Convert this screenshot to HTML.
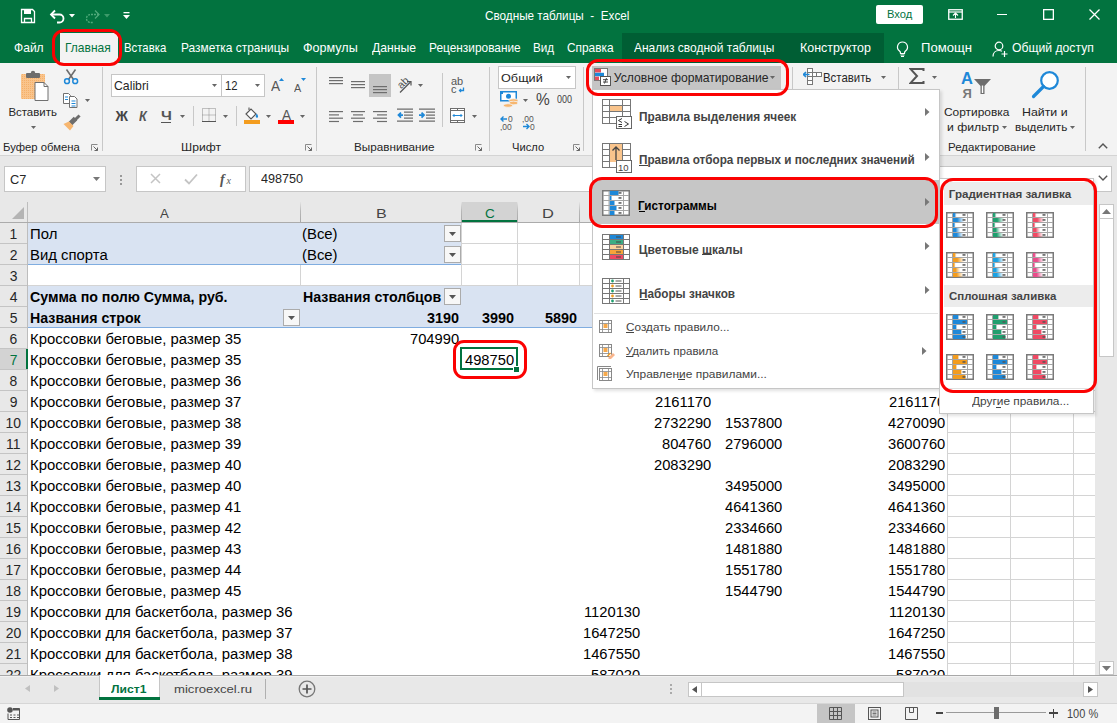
<!DOCTYPE html><html><head><meta charset="utf-8"><title>Excel</title><style>
html,body{margin:0;padding:0}
body{width:1117px;height:723px;overflow:hidden;position:relative;background:#fff;font-family:"Liberation Sans",sans-serif}
.t{position:absolute;white-space:nowrap;line-height:1}
svg{display:block}
</style></head><body>
<div style="position:absolute;left:0px;top:0px;width:1117px;height:63px;background:#02733f;"></div>
<div style="position:absolute;left:622px;top:33px;width:262px;height:30px;background:#005e34;"></div>
<svg style="position:absolute;left:20px;top:8px;" width="16" height="16" viewBox="0 0 16 16"><path d="M1.5 1.5h11l2 2v11h-13z" fill="none" stroke="#fff" stroke-width="1.3"/><rect x="4" y="1.5" width="7" height="4.5" fill="#fff"/><path d="M4.5 14.5v-4h7v4" fill="none" stroke="#fff" stroke-width="1.3"/></svg>
<svg style="position:absolute;left:49px;top:8px;" width="17" height="16" viewBox="0 0 17 16"><path d="M2 6.5h8.5a4 4 0 0 1 0 8H8" fill="none" stroke="#fff" stroke-width="1.8"/><path d="M6 2.5L2 6.5l4 4" fill="none" stroke="#fff" stroke-width="1.8"/></svg>
<svg style="position:absolute;left:69px;top:14px;" width="6" height="3.5" viewBox="0 0 6 3.5"><path d="M0 0h6l-3 3.5z" fill="#fff"/></svg>
<svg style="position:absolute;left:84px;top:8px;" width="17" height="16" viewBox="0 0 17 16"><path d="M15 6.5H6.5a4 4 0 0 0 0 8H9" fill="none" stroke="#4fa97a" stroke-width="1.3" stroke-dasharray="2 1"/><path d="M11 2.5l4 4-4 4" fill="none" stroke="#4fa97a" stroke-width="1.3"/></svg>
<svg style="position:absolute;left:104px;top:14px;" width="6" height="3.5" viewBox="0 0 6 3.5"><path d="M0 0h6l-3 3.5z" fill="#3d9a6a"/></svg>
<svg style="position:absolute;left:123px;top:12px;" width="7" height="8" viewBox="0 0 7 8"><rect x="0.5" y="0" width="6" height="1.3" fill="#fff"/><path d="M0 3h7l-3.5 4z" fill="#fff"/></svg>
<div class="t" style="left:485.41px;top:9.80px;font-size:12.75px;color:#fff;font-weight:400;transform:scaleX(0.9191);transform-origin:0 0;">Сводные таблицы  -  Excel</div>
<div style="position:absolute;left:876px;top:5px;width:47px;height:19px;background:#fff;border-radius:2px"></div>
<div class="t" style="left:886.71px;top:9.09px;font-size:11.59px;color:#02733f;font-weight:400;transform:scaleX(0.9641);transform-origin:0 0;">Вход</div>
<svg style="position:absolute;left:948px;top:9px;" width="15" height="11" viewBox="0 0 15 11"><rect x="0.75" y="0.75" width="13.5" height="9.5" fill="none" stroke="#fff" stroke-width="1.3"/><path d="M1 3h13" stroke="#fff" stroke-width="1.2"/><path d="M7.5 9V4.5M5 6.5l2.5-2.5 2.5 2.5" fill="none" stroke="#fff" stroke-width="1.1"/></svg>
<div style="position:absolute;left:997px;top:14px;width:10px;height:1.2px;background:#fff;"></div>
<svg style="position:absolute;left:1043px;top:9px;" width="11" height="11" viewBox="0 0 11 11"><rect x="0.65" y="0.65" width="9.7" height="9.7" fill="none" stroke="#fff" stroke-width="1.3"/></svg>
<svg style="position:absolute;left:1089px;top:9px;" width="11" height="11" viewBox="0 0 11 11"><path d="M0.5 0.5l10 10M10.5 0.5l-10 10" stroke="#fff" stroke-width="1.3"/></svg>
<div style="position:absolute;left:60px;top:33px;width:58px;height:30px;background:#f3f3f3;"></div>
<div class="t" style="left:13.64px;top:41.06px;font-size:13.04px;color:#fff;font-weight:400;transform:scaleX(0.9259);transform-origin:0 0;">Файл</div>
<div class="t" style="left:64.84px;top:41.06px;font-size:13.04px;color:#02733f;font-weight:400;transform:scaleX(0.9217);transform-origin:0 0;">Главная</div>
<div class="t" style="left:124.29px;top:41.06px;font-size:13.04px;color:#fff;font-weight:400;transform:scaleX(0.8711);transform-origin:0 0;">Вставка</div>
<div class="t" style="left:181.35px;top:41.06px;font-size:13.04px;color:#fff;font-weight:400;transform:scaleX(0.9140);transform-origin:0 0;">Разметка страницы</div>
<div class="t" style="left:303.11px;top:41.06px;font-size:13.04px;color:#fff;font-weight:400;transform:scaleX(0.9642);transform-origin:0 0;">Формулы</div>
<div class="t" style="left:371.94px;top:41.06px;font-size:13.04px;color:#fff;font-weight:400;transform:scaleX(0.9346);transform-origin:0 0;">Данные</div>
<div class="t" style="left:428.55px;top:41.06px;font-size:13.04px;color:#fff;font-weight:400;transform:scaleX(0.9115);transform-origin:0 0;">Рецензирование</div>
<div class="t" style="left:533.06px;top:41.06px;font-size:13.04px;color:#fff;font-weight:400;transform:scaleX(0.8967);transform-origin:0 0;">Вид</div>
<div class="t" style="left:567.41px;top:41.06px;font-size:13.04px;color:#fff;font-weight:400;transform:scaleX(0.9113);transform-origin:0 0;">Справка</div>
<div class="t" style="left:634.40px;top:41.06px;font-size:13.04px;color:#fff;font-weight:400;transform:scaleX(0.9203);transform-origin:0 0;">Анализ сводной таблицы</div>
<div class="t" style="left:800.00px;top:41.06px;font-size:13.04px;color:#fff;font-weight:400;transform:scaleX(0.9549);transform-origin:0 0;">Конструктор</div>
<div class="t" style="left:921.35px;top:41.06px;font-size:13.04px;color:#fff;font-weight:400;transform:scaleX(1.0052);transform-origin:0 0;">Помощн</div>
<div class="t" style="left:1011.75px;top:41.06px;font-size:13.04px;color:#fff;font-weight:400;transform:scaleX(0.9344);transform-origin:0 0;">Общий доступ</div>
<svg style="position:absolute;left:895px;top:41px;" width="15" height="16" viewBox="0 0 15 16"><path d="M7.5 1a5 5 0 0 0-3 9c.6.5 1 1.3 1 2v.5h4V12c0-.7.4-1.5 1-2a5 5 0 0 0-3-9z" fill="none" stroke="#fff" stroke-width="1.2"/><path d="M5.5 14h4M6 15.5h3" stroke="#fff" stroke-width="1"/></svg>
<svg style="position:absolute;left:992px;top:41px;" width="17" height="16" viewBox="0 0 17 16"><circle cx="7" cy="5" r="3.8" fill="none" stroke="#fff" stroke-width="1.2"/><path d="M1 15.5c0-3.5 2.5-6 6-6 1.2 0 2.2.3 3 .8" fill="none" stroke="#fff" stroke-width="1.2"/><path d="M12.5 10v6M9.5 13h6" stroke="#fff" stroke-width="1.2"/></svg>
<div style="position:absolute;left:0px;top:63px;width:1117px;height:92px;background:#f3f3f3;"></div>
<div style="position:absolute;left:0px;top:155px;width:1117px;height:1px;background:#d4d4d4;"></div>
<svg style="position:absolute;left:20px;top:70px;" width="30" height="32" viewBox="0 0 30 32"><defs><pattern id="dot" width="2" height="2" patternUnits="userSpaceOnUse"><rect width="2" height="2" fill="#f9c48c"/><rect width="1" height="1" fill="#f5b06a"/></pattern></defs>
<rect x="1" y="4" width="24" height="25" rx="1" fill="url(#dot)"/>
<rect x="6" y="3" width="14" height="5" rx="1" fill="#6d6d6d"/><circle cx="13" cy="3" r="2.2" fill="#6d6d6d"/>
<path d="M15 12.5h9l4 4v14h-13z" fill="#fff" stroke="#707070" stroke-width="1"/><path d="M24 12.5v4h4" fill="none" stroke="#707070" stroke-width="1"/></svg>
<div class="t" style="left:8.39px;top:106.71px;font-size:11.45px;color:#262626;font-weight:400;">Вставить</div>
<svg style="position:absolute;left:31.0px;top:126.0px;" width="5" height="3" viewBox="0 0 5 3"><path d="M0 0h5l-2.5 3z" fill="#666"/></svg>
<svg style="position:absolute;left:62px;top:68px;" width="18" height="17" viewBox="0 0 18 17"><path d="M4.5 1.5l7 10M13.5 1.5l-7 10" stroke="#6d6d6d" stroke-width="1.6"/><circle cx="5" cy="13.2" r="2.4" fill="none" stroke="#1e88d8" stroke-width="1.5"/><circle cx="13.2" cy="13.2" r="2.4" fill="none" stroke="#1e88d8" stroke-width="1.5"/></svg>
<svg style="position:absolute;left:62px;top:92px;" width="17" height="16" viewBox="0 0 17 16"><path d="M1.5 1.5h5l2 2v8h-7z" fill="#fff" stroke="#707070"/><path d="M7.5 4.5h5l2.5 2.5v8.5h-7.5z" fill="#fff" stroke="#707070"/><path d="M3 5h3M3 7.5h3M9.5 9h4M9.5 11.5h4M9.5 14h4" stroke="#1e88d8" stroke-width="1.2"/></svg>
<svg style="position:absolute;left:85.0px;top:99.0px;" width="5" height="3" viewBox="0 0 5 3"><path d="M0 0h5l-2.5 3z" fill="#666"/></svg>
<svg style="position:absolute;left:62px;top:114px;" width="19" height="17" viewBox="0 0 19 17"><path d="M16.5 2.5l-3 3" stroke="#6d6d6d" stroke-width="3" stroke-linecap="square"/><path d="M13.5 4.5l-5 5" stroke="#6d6d6d" stroke-width="5"/><path d="M7 7.5l4.5 4.5-3.5 4.5L1.5 10z" fill="#f7b66f"/></svg>
<div class="t" style="left:3.09px;top:141.58px;font-size:11.01px;color:#262626;font-weight:400;transform:scaleX(1.0276);transform-origin:0 0;">Буфер обмена</div>
<svg style="position:absolute;left:91px;top:144px;" width="7" height="7" viewBox="0 0 7 7"><path d="M0.5 6.5V0.5h6" fill="none" stroke="#8a8a8a" stroke-width="1"/><path d="M2.5 2.5l4 4M3.5 6.5h3v-3" fill="none" stroke="#666" stroke-width="1"/></svg>
<div style="position:absolute;left:102px;top:67px;width:1px;height:84px;background:#c8c8c8;"></div>
<div style="position:absolute;left:111px;top:74px;width:111px;height:23px;background:#fff;border:1px solid #c6c6c6;box-sizing:border-box;"></div>
<div style="position:absolute;left:221px;top:74px;width:44px;height:23px;background:#fff;border:1px solid #c6c6c6;box-sizing:border-box;"></div>
<div class="t" style="left:114.09px;top:79.69px;font-size:12.17px;color:#262626;font-weight:400;transform:scaleX(1.0075);transform-origin:0 0;">Calibri</div>
<svg style="position:absolute;left:211.5px;top:84.0px;" width="5" height="3" viewBox="0 0 5 3"><path d="M0 0h5l-2.5 3z" fill="#666"/></svg>
<div class="t" style="left:225.05px;top:79.69px;font-size:12.17px;color:#262626;font-weight:400;transform:scaleX(0.9257);transform-origin:0 0;">12</div>
<svg style="position:absolute;left:255.1px;top:84.0px;" width="5" height="3" viewBox="0 0 5 3"><path d="M0 0h5l-2.5 3z" fill="#666"/></svg>
<div class="t" style="left:271.40px;top:79.23px;font-size:14.49px;color:#555;font-weight:400;transform:scaleX(0.9442);transform-origin:0 0;">A</div>
<svg style="position:absolute;left:279px;top:78px;" width="5" height="3" viewBox="0 0 5 3"><path d="M0 3h5l-2.5-3z" fill="#1e88d8"/></svg>
<div class="t" style="left:294.40px;top:81.56px;font-size:11.74px;color:#555;font-weight:400;transform:scaleX(0.9223);transform-origin:0 0;">A</div>
<svg style="position:absolute;left:301px;top:78px;" width="5" height="3" viewBox="0 0 5 3"><path d="M0 0h5l-2.5 3z" fill="#1e88d8"/></svg>
<div class="t" style="left:115.50px;top:109.85px;font-size:13.77px;color:#444;font-weight:700;">Ж</div>
<div class="t" style="left:138.55px;top:109.85px;font-size:13.77px;color:#555;font-weight:700;font-style:italic;transform:scaleX(0.9163);transform-origin:0 0;">К</div>
<div class="t" style="left:160.65px;top:109.46px;font-size:13.04px;color:#555;font-weight:700;transform:scaleX(1.1897);transform-origin:0 0;">Ч</div>
<div style="position:absolute;left:161px;top:122px;width:10px;height:1.3px;background:#555;"></div>
<svg style="position:absolute;left:180.0px;top:115.0px;" width="5" height="3" viewBox="0 0 5 3"><path d="M0 0h5l-2.5 3z" fill="#666"/></svg>
<div style="position:absolute;left:193px;top:106px;width:1px;height:20px;background:#c8c8c8;"></div>
<svg style="position:absolute;left:202px;top:108px;" width="14" height="14" viewBox="0 0 14 14"><path d="M0.5 0.5h13v13h-13zM7 0.5v13M0.5 7h13" fill="none" stroke="#8a8a8a" stroke-width="1" stroke-dasharray="1 1"/><path d="M0 13.5h14" stroke="#555" stroke-width="1"/></svg>
<svg style="position:absolute;left:223.0px;top:115.0px;" width="5" height="3" viewBox="0 0 5 3"><path d="M0 0h5l-2.5 3z" fill="#666"/></svg>
<div style="position:absolute;left:236px;top:106px;width:1px;height:20px;background:#c8c8c8;"></div>
<svg style="position:absolute;left:243px;top:107px;" width="18" height="17" viewBox="0 0 18 17"><path d="M3 7l5-5 5 5-5 5z" fill="#fff" stroke="#555" stroke-width="1.1"/><path d="M6 3V0.5" stroke="#555" stroke-width="1.1"/><path d="M13.5 6.5c1.5 1.5 2 3 1.2 4-.8.6-2 0-2-1.3z" fill="#1e88d8"/><rect x="1" y="13" width="16" height="4" fill="#f39c1e"/></svg>
<svg style="position:absolute;left:266.0px;top:115.0px;" width="5" height="3" viewBox="0 0 5 3"><path d="M0 0h5l-2.5 3z" fill="#666"/></svg>
<div class="t" style="left:281.80px;top:108.23px;font-size:14.49px;color:#555;font-weight:400;transform:scaleX(0.9338);transform-origin:0 0;">A</div>
<div style="position:absolute;left:278px;top:120px;width:16px;height:4px;background:#f00;"></div>
<svg style="position:absolute;left:300.0px;top:115.0px;" width="5" height="3" viewBox="0 0 5 3"><path d="M0 0h5l-2.5 3z" fill="#666"/></svg>
<div class="t" style="left:181.43px;top:141.58px;font-size:11.01px;color:#262626;font-weight:400;transform:scaleX(1.1043);transform-origin:0 0;">Шрифт</div>
<svg style="position:absolute;left:305px;top:144px;" width="7" height="7" viewBox="0 0 7 7"><path d="M0.5 6.5V0.5h6" fill="none" stroke="#8a8a8a" stroke-width="1"/><path d="M2.5 2.5l4 4M3.5 6.5h3v-3" fill="none" stroke="#666" stroke-width="1"/></svg>
<div style="position:absolute;left:316px;top:67px;width:1px;height:84px;background:#c8c8c8;"></div>
<svg style="position:absolute;left:329px;top:77px;" width="14" height="8" viewBox="0 0 14 8"><rect x="0" y="0" width="14" height="1.2" fill="#6d6d6d"/><rect x="0" y="3" width="14" height="1.2" fill="#6d6d6d"/><rect x="0" y="6" width="14" height="1.2" fill="#6d6d6d"/></svg>
<svg style="position:absolute;left:351px;top:81px;" width="14" height="8" viewBox="0 0 14 8"><rect x="0" y="0" width="14" height="1.2" fill="#6d6d6d"/><rect x="0" y="3" width="14" height="1.2" fill="#6d6d6d"/><rect x="0" y="6" width="14" height="1.2" fill="#6d6d6d"/></svg>
<div style="position:absolute;left:369px;top:74px;width:22px;height:23px;background:#c5c5c5;"></div>
<svg style="position:absolute;left:373px;top:86px;" width="14" height="8" viewBox="0 0 14 8"><rect x="0" y="0" width="14" height="1.2" fill="#6d6d6d"/><rect x="0" y="3" width="14" height="1.2" fill="#6d6d6d"/><rect x="0" y="6" width="14" height="1.2" fill="#6d6d6d"/></svg>
<svg style="position:absolute;left:396px;top:76px;" width="19" height="17" viewBox="0 0 19 17"><text x="1" y="11" font-family="Liberation Sans" font-size="10.5" fill="#555" transform="rotate(-45 6 7)">ab</text><path d="M4 16.5L14.5 6" stroke="#555" stroke-width="1.2"/><path d="M11 5.5h4v4" fill="none" stroke="#555" stroke-width="1.2"/></svg>
<svg style="position:absolute;left:417.5px;top:84.0px;" width="5" height="3" viewBox="0 0 5 3"><path d="M0 0h5l-2.5 3z" fill="#666"/></svg>
<svg style="position:absolute;left:329px;top:111px;" width="14" height="11.9" viewBox="0 0 14 11.9"><rect x="0" y="0" width="14" height="1.2" fill="#6d6d6d"/><rect x="0" y="3.3" width="10" height="1.2" fill="#6d6d6d"/><rect x="0" y="6.6" width="14" height="1.2" fill="#6d6d6d"/><rect x="0" y="9.9" width="10" height="1.2" fill="#6d6d6d"/></svg>
<svg style="position:absolute;left:351px;top:111px;" width="14" height="11.9" viewBox="0 0 14 11.9"><rect x="0" y="0" width="14" height="1.2" fill="#6d6d6d"/><rect x="2" y="3.3" width="10" height="1.2" fill="#6d6d6d"/><rect x="0" y="6.6" width="14" height="1.2" fill="#6d6d6d"/><rect x="2" y="9.9" width="10" height="1.2" fill="#6d6d6d"/></svg>
<svg style="position:absolute;left:373px;top:111px;" width="14" height="11.9" viewBox="0 0 14 11.9"><rect x="0" y="0" width="14" height="1.2" fill="#6d6d6d"/><rect x="4" y="3.3" width="10" height="1.2" fill="#6d6d6d"/><rect x="0" y="6.6" width="14" height="1.2" fill="#6d6d6d"/><rect x="4" y="9.9" width="10" height="1.2" fill="#6d6d6d"/></svg>
<svg style="position:absolute;left:397px;top:108px;" width="17" height="14" viewBox="0 0 17 14"><path d="M0 1.1h16M7 4.1h9M7 7.1h9M7 10.1h9M0 13.1h16" stroke="#6d6d6d" stroke-width="1.2"/><path d="M1.5 7.1h4.5M4 4.6l-2.5 2.5 2.5 2.5" fill="none" stroke="#1e88d8" stroke-width="1.8"/></svg>
<svg style="position:absolute;left:419px;top:108px;" width="17" height="14" viewBox="0 0 17 14"><path d="M0 1.1h16M7 4.1h9M7 7.1h9M7 10.1h9M0 13.1h16" stroke="#6d6d6d" stroke-width="1.2"/><path d="M0 7.1h4.5M2.5 4.6l2.5 2.5-2.5 2.5" fill="none" stroke="#1e88d8" stroke-width="1.8"/></svg>
<div style="position:absolute;left:442px;top:73px;width:1px;height:54px;background:#c8c8c8;"></div>
<svg style="position:absolute;left:451px;top:76px;" width="15" height="18" viewBox="0 0 15 18"><text x="0" y="9" font-family="Liberation Sans" font-size="11" fill="#555">ab</text><text x="0" y="17" font-family="Liberation Sans" font-size="11" fill="#555">c</text><path d="M12.5 11.5v3H8.5M10 13l-1.5 1.5 1.5 1.5" fill="none" stroke="#1e88d8" stroke-width="1.3"/></svg>
<svg style="position:absolute;left:450px;top:108px;" width="15" height="15" viewBox="0 0 15 15"><rect x="0.5" y="0.5" width="14" height="14" fill="#fff" stroke="#6d6d6d"/><path d="M0.5 2.5h14M0.5 12.5h14M7.5 0.5v2M7.5 12.5v2" stroke="#6d6d6d"/><path d="M3 7.5h9M4.5 6l-1.5 1.5 1.5 1.5M10.5 6l1.5 1.5-1.5 1.5" fill="none" stroke="#1e88d8" stroke-width="1"/></svg>
<svg style="position:absolute;left:472.0px;top:115.0px;" width="5" height="3" viewBox="0 0 5 3"><path d="M0 0h5l-2.5 3z" fill="#666"/></svg>
<div class="t" style="left:354.26px;top:141.58px;font-size:11.01px;color:#262626;font-weight:400;transform:scaleX(1.0631);transform-origin:0 0;">Выравнивание</div>
<svg style="position:absolute;left:475px;top:144px;" width="7" height="7" viewBox="0 0 7 7"><path d="M0.5 6.5V0.5h6" fill="none" stroke="#8a8a8a" stroke-width="1"/><path d="M2.5 2.5l4 4M3.5 6.5h3v-3" fill="none" stroke="#666" stroke-width="1"/></svg>
<div style="position:absolute;left:489px;top:67px;width:1px;height:84px;background:#c8c8c8;"></div>
<div style="position:absolute;left:498px;top:66px;width:78px;height:23px;background:#fff;border:1px solid #c6c6c6;box-sizing:border-box;"></div>
<div class="t" style="left:500.73px;top:72.06px;font-size:11.74px;color:#262626;font-weight:400;transform:scaleX(1.0812);transform-origin:0 0;">Общий</div>
<svg style="position:absolute;left:566.0px;top:76.0px;" width="5" height="3" viewBox="0 0 5 3"><path d="M0 0h5l-2.5 3z" fill="#666"/></svg>
<svg style="position:absolute;left:500px;top:91px;" width="19" height="18" viewBox="0 0 19 18"><rect x="0.75" y="0.75" width="15.5" height="9" fill="#fff" stroke="#1e88d8" stroke-width="1.5"/><rect x="0" y="0" width="3" height="3" fill="#1e88d8"/><circle cx="8.5" cy="5.2" r="2.5" fill="#1e88d8"/><g fill="#f7b66f" stroke="#f3f3f3" stroke-width="0.8"><ellipse cx="13.5" cy="9.5" rx="4.5" ry="1.8"/><ellipse cx="13.5" cy="12" rx="4.5" ry="1.8"/><ellipse cx="8" cy="14.5" rx="4.5" ry="1.8"/></g></svg>
<svg style="position:absolute;left:523.0px;top:99.0px;" width="5" height="3" viewBox="0 0 5 3"><path d="M0 0h5l-2.5 3z" fill="#666"/></svg>
<div class="t" style="left:536.46px;top:91.87px;font-size:16.81px;color:#444;font-weight:400;transform:scaleX(0.9213);transform-origin:0 0;">%</div>
<div class="t" style="left:557.34px;top:94.67px;font-size:10.43px;color:#444;font-weight:400;transform:scaleX(0.8619);transform-origin:0 0;">000</div>
<svg style="position:absolute;left:500px;top:114px;" width="16" height="17" viewBox="0 0 16 17"><path d="M1 5h6M3.5 2.5L1 5l2.5 2.5" fill="none" stroke="#1e88d8" stroke-width="1.4"/><text x="8" y="8" font-family="Liberation Sans" font-size="8.5" fill="#555">0</text><text x="0" y="15.5" font-family="Liberation Sans" font-size="8.5" fill="#555">,00</text></svg>
<svg style="position:absolute;left:522px;top:114px;" width="16" height="17" viewBox="0 0 16 17"><text x="0" y="8" font-family="Liberation Sans" font-size="8.5" fill="#555">,00</text><path d="M1 12.5h6M4.5 10l2.5 2.5-2.5 2.5" fill="none" stroke="#1e88d8" stroke-width="1.4"/><text x="8" y="15.5" font-family="Liberation Sans" font-size="8.5" fill="#555">0</text></svg>
<div class="t" style="left:511.71px;top:141.58px;font-size:11.01px;color:#262626;font-weight:400;transform:scaleX(1.0150);transform-origin:0 0;">Число</div>
<svg style="position:absolute;left:573px;top:144px;" width="7" height="7" viewBox="0 0 7 7"><path d="M0.5 6.5V0.5h6" fill="none" stroke="#8a8a8a" stroke-width="1"/><path d="M2.5 2.5l4 4M3.5 6.5h3v-3" fill="none" stroke="#666" stroke-width="1"/></svg>
<div style="position:absolute;left:583px;top:67px;width:1px;height:84px;background:#c8c8c8;"></div>
<div style="position:absolute;left:592px;top:66px;width:189px;height:23px;background:#c5c5c5;"></div>
<svg style="position:absolute;left:594px;top:68px;" width="18" height="19" viewBox="0 0 18 19"><rect x="0.5" y="0.5" width="13" height="12" fill="#fff" stroke="#777"/><rect x="1" y="1" width="6" height="3.5" fill="#e84c5a"/><rect x="1" y="4.8" width="9" height="3.5" fill="#1e88d8"/><rect x="1" y="8.6" width="4" height="3.5" fill="#e84c5a"/><rect x="6.5" y="8.5" width="10" height="9" fill="#fff" stroke="#555"/><path d="M9 11.7h5M9 14h5M12.5 10l-2 5.5" stroke="#333" stroke-width="0.9"/></svg>
<div class="t" style="left:613.84px;top:71.69px;font-size:12.17px;color:#262626;font-weight:400;">Условное форматирование</div>
<svg style="position:absolute;left:769.5px;top:76.0px;" width="5" height="3" viewBox="0 0 5 3"><path d="M0 0h5l-2.5 3z" fill="#666"/></svg>
<div style="position:absolute;left:792px;top:67px;width:1px;height:84px;background:#c8c8c8;"></div>
<svg style="position:absolute;left:803px;top:68px;" width="19" height="17" viewBox="0 0 19 17"><rect x="4.5" y="0.5" width="5" height="4" fill="#fff" stroke="#777"/><rect x="4.5" y="4.5" width="5" height="4" fill="#fff" stroke="#777"/><rect x="4.5" y="8.5" width="5" height="4" fill="#fff" stroke="#777"/><rect x="4.5" y="12.5" width="5" height="4" fill="#fff" stroke="#777"/><rect x="9.5" y="4.5" width="4" height="4" fill="#fff" stroke="#777"/><rect x="13.5" y="4.5" width="5" height="4" fill="#fff" stroke="#777"/><path d="M0.5 6.5h6M3 4l-2.5 2.5L3 9" fill="none" stroke="#1e88d8" stroke-width="1.6"/></svg>
<div class="t" style="left:822.69px;top:71.69px;font-size:12.17px;color:#262626;font-weight:400;transform:scaleX(0.9371);transform-origin:0 0;">Вставить</div>
<svg style="position:absolute;left:881.0px;top:76.0px;" width="5" height="3" viewBox="0 0 5 3"><path d="M0 0h5l-2.5 3z" fill="#666"/></svg>
<div style="position:absolute;left:898px;top:67px;width:1px;height:84px;background:#c8c8c8;"></div>
<svg style="position:absolute;left:909px;top:68px;" width="16" height="16" viewBox="0 0 16 16"><path d="M14.5 3V1H1.5l6.5 7-6.5 7h13v-2" fill="none" stroke="#555" stroke-width="2"/></svg>
<svg style="position:absolute;left:932.0px;top:76.0px;" width="5" height="3" viewBox="0 0 5 3"><path d="M0 0h5l-2.5 3z" fill="#666"/></svg>
<svg style="position:absolute;left:961px;top:70px;" width="32" height="29" viewBox="0 0 32 29"><text x="0" y="14" font-family="Liberation Sans" font-weight="bold" font-size="16.5" fill="#1e88d8">A</text><text x="1.5" y="27.5" font-family="Liberation Sans" font-weight="bold" font-size="13" fill="#777">Я</text><path d="M13 9h17l-6.5 7v8h-4v-8z" fill="#6d6d6d"/><path d="M21.5 15.5v7.5" stroke="#fff" stroke-width="1.4"/></svg>
<svg style="position:absolute;left:1030px;top:70px;" width="30" height="30" viewBox="0 0 30 30"><circle cx="19.5" cy="10.5" r="8.3" fill="#fff" stroke="#1e88d8" stroke-width="2.2"/><path d="M13.5 16.5L3.5 26.5" stroke="#1e88d8" stroke-width="3.2" stroke-linecap="round"/></svg>
<div class="t" style="left:944.20px;top:106.99px;font-size:11.59px;color:#262626;font-weight:400;transform:scaleX(1.0299);transform-origin:0 0;">Сортировка</div>
<div class="t" style="left:947.15px;top:122.29px;font-size:11.59px;color:#262626;font-weight:400;transform:scaleX(1.0529);transform-origin:0 0;">и фильтр</div>
<svg style="position:absolute;left:1002.0px;top:126.0px;" width="5" height="3" viewBox="0 0 5 3"><path d="M0 0h5l-2.5 3z" fill="#666"/></svg>
<div class="t" style="left:1022.01px;top:106.99px;font-size:11.59px;color:#262626;font-weight:400;transform:scaleX(1.0672);transform-origin:0 0;">Найти и</div>
<div class="t" style="left:1014.98px;top:122.29px;font-size:11.59px;color:#262626;font-weight:400;transform:scaleX(1.0077);transform-origin:0 0;">выделить</div>
<svg style="position:absolute;left:1070.0px;top:126.0px;" width="5" height="3" viewBox="0 0 5 3"><path d="M0 0h5l-2.5 3z" fill="#666"/></svg>
<div class="t" style="left:947.78px;top:141.78px;font-size:11.01px;color:#262626;font-weight:400;transform:scaleX(1.0461);transform-origin:0 0;">Редактирование</div>
<div style="position:absolute;left:1085px;top:67px;width:1px;height:84px;background:#c8c8c8;"></div>
<svg style="position:absolute;left:1098px;top:143px;" width="10" height="6" viewBox="0 0 10 6"><path d="M0.8 5.2L5 1l4.2 4.2" fill="none" stroke="#555" stroke-width="1.4"/></svg>
<div style="position:absolute;left:0px;top:156px;width:1117px;height:46px;background:#e8e8e8;"></div>
<div style="position:absolute;left:4px;top:166px;width:102px;height:26px;background:#fff;border:1px solid #c6c6c6;box-sizing:border-box;"></div>
<div class="t" style="left:10.36px;top:173.55px;font-size:12.46px;color:#262626;font-weight:400;transform:scaleX(1.0242);transform-origin:0 0;">C7</div>
<svg style="position:absolute;left:92.5px;top:176.5px;" width="7" height="4" viewBox="0 0 7 4"><path d="M0 0h7l-3.5 4z" fill="#777"/></svg>
<div style="position:absolute;left:120px;top:175px;width:2px;height:2px;background:#999;"></div>
<div style="position:absolute;left:120px;top:179px;width:2px;height:2px;background:#999;"></div>
<div style="position:absolute;left:120px;top:183px;width:2px;height:2px;background:#999;"></div>
<div style="position:absolute;left:136px;top:166px;width:110px;height:26px;background:#fff;border:1px solid #c6c6c6;box-sizing:border-box;"></div>
<svg style="position:absolute;left:150px;top:173px;" width="11" height="11" viewBox="0 0 11 11"><path d="M1 1l9 9M10 1l-9 9" stroke="#c4c4c4" stroke-width="1.5"/></svg>
<svg style="position:absolute;left:184px;top:173px;" width="14" height="12" viewBox="0 0 14 12"><path d="M1 6.5l4 4L13 1.5" fill="none" stroke="#c4c4c4" stroke-width="1.8"/></svg>
<svg style="position:absolute;left:219px;top:170px;" width="16" height="18" viewBox="0 0 16 18"><text x="1" y="13.5" font-family="Liberation Serif" font-style="italic" font-weight="bold" font-size="14" fill="#555">f</text><text x="7.5" y="13.5" font-family="Liberation Serif" font-style="italic" font-size="10" fill="#555">x</text></svg>
<div style="position:absolute;left:249px;top:166px;width:863px;height:26px;background:#fff;border:1px solid #c6c6c6;box-sizing:border-box;"></div>
<div class="t" style="left:260.95px;top:173.30px;font-size:12.75px;color:#262626;font-weight:400;transform:scaleX(0.9897);transform-origin:0 0;">498750</div>
<svg style="position:absolute;left:1098px;top:175px;" width="10" height="6" viewBox="0 0 10 6"><path d="M0.8 0.8L5 5l4.2-4.2" fill="none" stroke="#555" stroke-width="1.4"/></svg>
<div style="position:absolute;left:0px;top:202px;width:1099px;height:20px;background:#e8e8e8;"></div>
<div style="position:absolute;left:0px;top:222px;width:27px;height:453px;background:#e8e8e8;"></div>
<svg style="position:absolute;left:11px;top:206px;" width="14" height="14" viewBox="0 0 14 14"><path d="M13 1v12H1z" fill="#b4b4b4"/></svg>
<div style="position:absolute;left:28px;top:223px;width:1067px;height:452px;background:#fff;"></div>
<div style="position:absolute;left:461px;top:202px;width:56px;height:20px;background:#d3d3d3;"></div>
<div style="position:absolute;left:461px;top:220px;width:56px;height:2px;background:#02733f;"></div>
<div style="position:absolute;left:300px;top:202px;width:1px;height:20px;background:linear-gradient(#e4e4e4,#b8b8b8 45%,#a8a8a8);"></div>
<div style="position:absolute;left:461px;top:202px;width:1px;height:20px;background:linear-gradient(#e4e4e4,#b8b8b8 45%,#a8a8a8);"></div>
<div style="position:absolute;left:517px;top:202px;width:1px;height:20px;background:linear-gradient(#e4e4e4,#b8b8b8 45%,#a8a8a8);"></div>
<div style="position:absolute;left:579px;top:202px;width:1px;height:20px;background:linear-gradient(#e4e4e4,#b8b8b8 45%,#a8a8a8);"></div>
<div style="position:absolute;left:643px;top:202px;width:1px;height:20px;background:linear-gradient(#e4e4e4,#b8b8b8 45%,#a8a8a8);"></div>
<div style="position:absolute;left:713px;top:202px;width:1px;height:20px;background:linear-gradient(#e4e4e4,#b8b8b8 45%,#a8a8a8);"></div>
<div style="position:absolute;left:784px;top:202px;width:1px;height:20px;background:linear-gradient(#e4e4e4,#b8b8b8 45%,#a8a8a8);"></div>
<div style="position:absolute;left:947px;top:202px;width:1px;height:20px;background:linear-gradient(#e4e4e4,#b8b8b8 45%,#a8a8a8);"></div>
<div style="position:absolute;left:1010px;top:202px;width:1px;height:20px;background:linear-gradient(#e4e4e4,#b8b8b8 45%,#a8a8a8);"></div>
<div style="position:absolute;left:1073px;top:202px;width:1px;height:20px;background:linear-gradient(#e4e4e4,#b8b8b8 45%,#a8a8a8);"></div>
<div style="position:absolute;left:1095px;top:202px;width:1px;height:20px;background:linear-gradient(#e4e4e4,#b8b8b8 45%,#a8a8a8);"></div>
<div style="position:absolute;left:27px;top:202px;width:1px;height:473px;background:#bdbdbd;"></div>
<div style="position:absolute;left:0px;top:222px;width:1095px;height:1px;background:#ababab;"></div>
<div style="position:absolute;left:0px;top:243px;width:27px;height:1px;background:#c4c4c4;"></div>
<div style="position:absolute;left:0px;top:264px;width:27px;height:1px;background:#c4c4c4;"></div>
<div style="position:absolute;left:0px;top:285px;width:27px;height:1px;background:#c4c4c4;"></div>
<div style="position:absolute;left:0px;top:306px;width:27px;height:1px;background:#c4c4c4;"></div>
<div style="position:absolute;left:0px;top:327px;width:27px;height:1px;background:#c4c4c4;"></div>
<div style="position:absolute;left:0px;top:348px;width:27px;height:1px;background:#c4c4c4;"></div>
<div style="position:absolute;left:0px;top:369px;width:27px;height:1px;background:#c4c4c4;"></div>
<div style="position:absolute;left:0px;top:390px;width:27px;height:1px;background:#c4c4c4;"></div>
<div style="position:absolute;left:0px;top:411px;width:27px;height:1px;background:#c4c4c4;"></div>
<div style="position:absolute;left:0px;top:432px;width:27px;height:1px;background:#c4c4c4;"></div>
<div style="position:absolute;left:0px;top:453px;width:27px;height:1px;background:#c4c4c4;"></div>
<div style="position:absolute;left:0px;top:474px;width:27px;height:1px;background:#c4c4c4;"></div>
<div style="position:absolute;left:0px;top:495px;width:27px;height:1px;background:#c4c4c4;"></div>
<div style="position:absolute;left:0px;top:516px;width:27px;height:1px;background:#c4c4c4;"></div>
<div style="position:absolute;left:0px;top:537px;width:27px;height:1px;background:#c4c4c4;"></div>
<div style="position:absolute;left:0px;top:558px;width:27px;height:1px;background:#c4c4c4;"></div>
<div style="position:absolute;left:0px;top:579px;width:27px;height:1px;background:#c4c4c4;"></div>
<div style="position:absolute;left:0px;top:600px;width:27px;height:1px;background:#c4c4c4;"></div>
<div style="position:absolute;left:0px;top:621px;width:27px;height:1px;background:#c4c4c4;"></div>
<div style="position:absolute;left:0px;top:642px;width:27px;height:1px;background:#c4c4c4;"></div>
<div style="position:absolute;left:0px;top:663px;width:27px;height:1px;background:#c4c4c4;"></div>
<div style="position:absolute;left:0px;top:684px;width:27px;height:1px;background:#c4c4c4;"></div>
<div style="position:absolute;left:0px;top:349px;width:27px;height:20px;background:#d3d3d3;"></div>
<div style="position:absolute;left:26px;top:349px;width:2px;height:20px;background:#02733f;"></div>
<div style="position:absolute;left:28px;top:243px;width:1067px;height:1px;background:#d4d4d4;"></div>
<div style="position:absolute;left:28px;top:264px;width:1067px;height:1px;background:#d4d4d4;"></div>
<div style="position:absolute;left:28px;top:285px;width:1067px;height:1px;background:#d4d4d4;"></div>
<div style="position:absolute;left:28px;top:306px;width:1067px;height:1px;background:#d4d4d4;"></div>
<div style="position:absolute;left:28px;top:327px;width:1067px;height:1px;background:#d4d4d4;"></div>
<div style="position:absolute;left:28px;top:348px;width:1067px;height:1px;background:#d4d4d4;"></div>
<div style="position:absolute;left:28px;top:369px;width:1067px;height:1px;background:#d4d4d4;"></div>
<div style="position:absolute;left:28px;top:390px;width:1067px;height:1px;background:#d4d4d4;"></div>
<div style="position:absolute;left:28px;top:411px;width:1067px;height:1px;background:#d4d4d4;"></div>
<div style="position:absolute;left:28px;top:432px;width:1067px;height:1px;background:#d4d4d4;"></div>
<div style="position:absolute;left:28px;top:453px;width:1067px;height:1px;background:#d4d4d4;"></div>
<div style="position:absolute;left:28px;top:474px;width:1067px;height:1px;background:#d4d4d4;"></div>
<div style="position:absolute;left:28px;top:495px;width:1067px;height:1px;background:#d4d4d4;"></div>
<div style="position:absolute;left:28px;top:516px;width:1067px;height:1px;background:#d4d4d4;"></div>
<div style="position:absolute;left:28px;top:537px;width:1067px;height:1px;background:#d4d4d4;"></div>
<div style="position:absolute;left:28px;top:558px;width:1067px;height:1px;background:#d4d4d4;"></div>
<div style="position:absolute;left:28px;top:579px;width:1067px;height:1px;background:#d4d4d4;"></div>
<div style="position:absolute;left:28px;top:600px;width:1067px;height:1px;background:#d4d4d4;"></div>
<div style="position:absolute;left:28px;top:621px;width:1067px;height:1px;background:#d4d4d4;"></div>
<div style="position:absolute;left:28px;top:642px;width:1067px;height:1px;background:#d4d4d4;"></div>
<div style="position:absolute;left:28px;top:663px;width:1067px;height:1px;background:#d4d4d4;"></div>
<div style="position:absolute;left:28px;top:684px;width:1067px;height:1px;background:#d4d4d4;"></div>
<div style="position:absolute;left:300px;top:223px;width:1px;height:452px;background:#d4d4d4;"></div>
<div style="position:absolute;left:461px;top:223px;width:1px;height:452px;background:#d4d4d4;"></div>
<div style="position:absolute;left:517px;top:223px;width:1px;height:452px;background:#d4d4d4;"></div>
<div style="position:absolute;left:579px;top:223px;width:1px;height:452px;background:#d4d4d4;"></div>
<div style="position:absolute;left:643px;top:223px;width:1px;height:452px;background:#d4d4d4;"></div>
<div style="position:absolute;left:713px;top:223px;width:1px;height:452px;background:#d4d4d4;"></div>
<div style="position:absolute;left:784px;top:223px;width:1px;height:452px;background:#d4d4d4;"></div>
<div style="position:absolute;left:947px;top:223px;width:1px;height:452px;background:#d4d4d4;"></div>
<div style="position:absolute;left:1010px;top:223px;width:1px;height:452px;background:#d4d4d4;"></div>
<div style="position:absolute;left:1073px;top:223px;width:1px;height:452px;background:#d4d4d4;"></div>
<div style="position:absolute;left:28px;top:328px;width:919px;height:347px;background:#fff;"></div>
<div style="position:absolute;left:28px;top:223px;width:433px;height:41px;background:#d9e3f2;"></div>
<div style="position:absolute;left:28px;top:264px;width:433px;height:1px;background:#80ade0;"></div>
<div style="position:absolute;left:28px;top:286px;width:919px;height:41px;background:#d9e3f2;"></div>
<div style="position:absolute;left:28px;top:327px;width:919px;height:1px;background:#80ade0;"></div>
<div style="position:absolute;left:444px;top:225px;width:17px;height:17px;background:#f7f7f7;border:1px solid #ababab;box-sizing:border-box;"></div>
<svg style="position:absolute;left:449.0px;top:231.5px;" width="7" height="4" viewBox="0 0 7 4"><path d="M0 0h7l-3.5 4z" fill="#555"/></svg>
<div style="position:absolute;left:444px;top:246px;width:17px;height:17px;background:#f7f7f7;border:1px solid #ababab;box-sizing:border-box;"></div>
<svg style="position:absolute;left:449.0px;top:252.5px;" width="7" height="4" viewBox="0 0 7 4"><path d="M0 0h7l-3.5 4z" fill="#555"/></svg>
<div style="position:absolute;left:444px;top:288px;width:17px;height:17px;background:#f7f7f7;border:1px solid #ababab;box-sizing:border-box;"></div>
<svg style="position:absolute;left:449.0px;top:294.5px;" width="7" height="4" viewBox="0 0 7 4"><path d="M0 0h7l-3.5 4z" fill="#555"/></svg>
<div style="position:absolute;left:283px;top:309px;width:17px;height:17px;background:#f7f7f7;border:1px solid #ababab;box-sizing:border-box;"></div>
<svg style="position:absolute;left:288.0px;top:315.5px;" width="7" height="4" viewBox="0 0 7 4"><path d="M0 0h7l-3.5 4z" fill="#555"/></svg>
<div class="t" style="left:160.40px;top:207.77px;font-size:12.32px;color:#444;font-weight:400;transform:scaleX(1.0742);transform-origin:0 0;">A</div>
<div class="t" style="left:376.11px;top:207.77px;font-size:12.32px;color:#444;font-weight:400;transform:scaleX(1.3049);transform-origin:0 0;">B</div>
<div class="t" style="left:485.02px;top:207.77px;font-size:12.32px;color:#02733f;font-weight:400;transform:scaleX(1.0994);transform-origin:0 0;">C</div>
<div class="t" style="left:541.68px;top:207.77px;font-size:12.32px;color:#444;font-weight:400;transform:scaleX(1.3370);transform-origin:0 0;">D</div>
<div class="t" style="left:9.43px;top:228.22px;font-size:13.91px;color:#262626;font-weight:400;">1</div>
<div class="t" style="left:9.64px;top:249.22px;font-size:13.91px;color:#262626;font-weight:400;">2</div>
<div class="t" style="left:9.64px;top:270.22px;font-size:13.91px;color:#262626;font-weight:400;">3</div>
<div class="t" style="left:9.71px;top:291.22px;font-size:13.91px;color:#262626;font-weight:400;">4</div>
<div class="t" style="left:9.64px;top:312.22px;font-size:13.91px;color:#262626;font-weight:400;">5</div>
<div class="t" style="left:9.57px;top:333.22px;font-size:13.91px;color:#262626;font-weight:400;">6</div>
<div class="t" style="left:9.64px;top:354.22px;font-size:13.91px;color:#02733f;font-weight:400;">7</div>
<div class="t" style="left:9.60px;top:375.22px;font-size:13.91px;color:#262626;font-weight:400;">8</div>
<div class="t" style="left:9.64px;top:396.22px;font-size:13.91px;color:#262626;font-weight:400;">9</div>
<div class="t" style="left:5.50px;top:417.22px;font-size:13.91px;color:#262626;font-weight:400;">10</div>
<div class="t" style="left:6.09px;top:438.22px;font-size:13.91px;color:#262626;font-weight:400;">11</div>
<div class="t" style="left:5.60px;top:459.22px;font-size:13.91px;color:#262626;font-weight:400;">12</div>
<div class="t" style="left:5.53px;top:480.22px;font-size:13.91px;color:#262626;font-weight:400;">13</div>
<div class="t" style="left:5.47px;top:501.22px;font-size:13.91px;color:#262626;font-weight:400;">14</div>
<div class="t" style="left:5.53px;top:522.22px;font-size:13.91px;color:#262626;font-weight:400;">15</div>
<div class="t" style="left:5.53px;top:543.22px;font-size:13.91px;color:#262626;font-weight:400;">16</div>
<div class="t" style="left:5.60px;top:564.22px;font-size:13.91px;color:#262626;font-weight:400;">17</div>
<div class="t" style="left:5.53px;top:585.22px;font-size:13.91px;color:#262626;font-weight:400;">18</div>
<div class="t" style="left:5.57px;top:606.22px;font-size:13.91px;color:#262626;font-weight:400;">19</div>
<div class="t" style="left:5.67px;top:627.22px;font-size:13.91px;color:#262626;font-weight:400;">20</div>
<div class="t" style="left:5.74px;top:648.22px;font-size:13.91px;color:#262626;font-weight:400;">21</div>
<div class="t" style="left:5.78px;top:669.22px;font-size:13.91px;color:#262626;font-weight:400;">22</div>
<div class="t" style="left:29.71px;top:228.22px;font-size:13.91px;color:#000;font-weight:400;transform:scaleX(1.0698);transform-origin:0 0;">Пол</div>
<div class="t" style="left:29.71px;top:249.22px;font-size:13.91px;color:#000;font-weight:400;transform:scaleX(1.0698);transform-origin:0 0;">Вид спорта</div>
<div class="t" style="left:302.21px;top:228.22px;font-size:13.91px;color:#000;font-weight:400;transform:scaleX(1.0698);transform-origin:0 0;">(Все)</div>
<div class="t" style="left:302.21px;top:249.22px;font-size:13.91px;color:#000;font-weight:400;transform:scaleX(1.0698);transform-origin:0 0;">(Все)</div>
<div class="t" style="left:30.33px;top:291.22px;font-size:13.91px;color:#000;font-weight:700;transform:scaleX(1.0214);transform-origin:0 0;">Сумма по полю Сумма, руб.</div>
<div class="t" style="left:302.88px;top:291.22px;font-size:13.91px;color:#000;font-weight:700;transform:scaleX(1.0214);transform-origin:0 0;">Названия столбцов</div>
<div class="t" style="left:29.98px;top:312.22px;font-size:13.91px;color:#000;font-weight:700;transform:scaleX(1.0214);transform-origin:0 0;">Названия строк</div>
<div class="t" style="left:427.04px;top:312.22px;font-size:13.91px;color:#000;font-weight:700;transform:scaleX(1.0349);transform-origin:0 0;">3190</div>
<div class="t" style="left:481.94px;top:312.22px;font-size:13.91px;color:#000;font-weight:700;transform:scaleX(1.0349);transform-origin:0 0;">3990</div>
<div class="t" style="left:545.24px;top:312.22px;font-size:13.91px;color:#000;font-weight:700;transform:scaleX(1.0349);transform-origin:0 0;">5890</div>
<div class="t" style="left:29.51px;top:333.22px;font-size:13.91px;color:#000;font-weight:400;transform:scaleX(1.0698);transform-origin:0 0;">Кроссовки беговые, размер 35</div>
<div class="t" style="left:29.51px;top:354.22px;font-size:13.91px;color:#000;font-weight:400;transform:scaleX(1.0698);transform-origin:0 0;">Кроссовки беговые, размер 35</div>
<div class="t" style="left:29.51px;top:375.22px;font-size:13.91px;color:#000;font-weight:400;transform:scaleX(1.0698);transform-origin:0 0;">Кроссовки беговые, размер 36</div>
<div class="t" style="left:29.51px;top:396.22px;font-size:13.91px;color:#000;font-weight:400;transform:scaleX(1.0698);transform-origin:0 0;">Кроссовки беговые, размер 37</div>
<div class="t" style="left:29.51px;top:417.22px;font-size:13.91px;color:#000;font-weight:400;transform:scaleX(1.0698);transform-origin:0 0;">Кроссовки беговые, размер 38</div>
<div class="t" style="left:29.51px;top:438.22px;font-size:13.91px;color:#000;font-weight:400;transform:scaleX(1.0698);transform-origin:0 0;">Кроссовки беговые, размер 39</div>
<div class="t" style="left:29.51px;top:459.22px;font-size:13.91px;color:#000;font-weight:400;transform:scaleX(1.0698);transform-origin:0 0;">Кроссовки беговые, размер 40</div>
<div class="t" style="left:29.51px;top:480.22px;font-size:13.91px;color:#000;font-weight:400;transform:scaleX(1.0698);transform-origin:0 0;">Кроссовки беговые, размер 40</div>
<div class="t" style="left:29.51px;top:501.22px;font-size:13.91px;color:#000;font-weight:400;transform:scaleX(1.0698);transform-origin:0 0;">Кроссовки беговые, размер 41</div>
<div class="t" style="left:29.51px;top:522.22px;font-size:13.91px;color:#000;font-weight:400;transform:scaleX(1.0698);transform-origin:0 0;">Кроссовки беговые, размер 42</div>
<div class="t" style="left:29.51px;top:543.22px;font-size:13.91px;color:#000;font-weight:400;transform:scaleX(1.0698);transform-origin:0 0;">Кроссовки беговые, размер 43</div>
<div class="t" style="left:29.51px;top:564.22px;font-size:13.91px;color:#000;font-weight:400;transform:scaleX(1.0698);transform-origin:0 0;">Кроссовки беговые, размер 44</div>
<div class="t" style="left:29.51px;top:585.22px;font-size:13.91px;color:#000;font-weight:400;transform:scaleX(1.0698);transform-origin:0 0;">Кроссовки беговые, размер 45</div>
<div class="t" style="left:29.51px;top:606.22px;font-size:13.91px;color:#000;font-weight:400;transform:scaleX(1.0698);transform-origin:0 0;">Кроссовки для баскетбола, размер 36</div>
<div class="t" style="left:29.51px;top:627.22px;font-size:13.91px;color:#000;font-weight:400;transform:scaleX(1.0698);transform-origin:0 0;">Кроссовки для баскетбола, размер 37</div>
<div class="t" style="left:29.51px;top:648.22px;font-size:13.91px;color:#000;font-weight:400;transform:scaleX(1.0698);transform-origin:0 0;">Кроссовки для баскетбола, размер 38</div>
<div class="t" style="left:29.51px;top:669.22px;font-size:13.91px;color:#000;font-weight:400;transform:scaleX(1.0698);transform-origin:0 0;">Кроссовки для баскетбола, размер 39</div>
<div class="t" style="left:409.91px;top:333.22px;font-size:13.91px;color:#000;font-weight:400;transform:scaleX(1.0584);transform-origin:0 0;">704990</div>
<div class="t" style="left:464.81px;top:354.22px;font-size:13.91px;color:#000;font-weight:400;transform:scaleX(1.0584);transform-origin:0 0;">498750</div>
<div class="t" style="left:654.76px;top:396.22px;font-size:13.91px;color:#000;font-weight:400;transform:scaleX(1.0584);transform-origin:0 0;">2161170</div>
<div class="t" style="left:888.86px;top:396.22px;font-size:13.91px;color:#000;font-weight:400;transform:scaleX(1.0584);transform-origin:0 0;">2161170</div>
<div class="t" style="left:653.73px;top:417.22px;font-size:13.91px;color:#000;font-weight:400;transform:scaleX(1.0584);transform-origin:0 0;">2732290</div>
<div class="t" style="left:725.23px;top:417.22px;font-size:13.91px;color:#000;font-weight:400;transform:scaleX(1.0584);transform-origin:0 0;">1537800</div>
<div class="t" style="left:887.83px;top:417.22px;font-size:13.91px;color:#000;font-weight:400;transform:scaleX(1.0584);transform-origin:0 0;">4270090</div>
<div class="t" style="left:661.91px;top:438.22px;font-size:13.91px;color:#000;font-weight:400;transform:scaleX(1.0584);transform-origin:0 0;">804760</div>
<div class="t" style="left:725.23px;top:438.22px;font-size:13.91px;color:#000;font-weight:400;transform:scaleX(1.0584);transform-origin:0 0;">2796000</div>
<div class="t" style="left:887.83px;top:438.22px;font-size:13.91px;color:#000;font-weight:400;transform:scaleX(1.0584);transform-origin:0 0;">3600760</div>
<div class="t" style="left:653.73px;top:459.22px;font-size:13.91px;color:#000;font-weight:400;transform:scaleX(1.0584);transform-origin:0 0;">2083290</div>
<div class="t" style="left:887.83px;top:459.22px;font-size:13.91px;color:#000;font-weight:400;transform:scaleX(1.0584);transform-origin:0 0;">2083290</div>
<div class="t" style="left:725.23px;top:480.22px;font-size:13.91px;color:#000;font-weight:400;transform:scaleX(1.0584);transform-origin:0 0;">3495000</div>
<div class="t" style="left:887.83px;top:480.22px;font-size:13.91px;color:#000;font-weight:400;transform:scaleX(1.0584);transform-origin:0 0;">3495000</div>
<div class="t" style="left:725.23px;top:501.22px;font-size:13.91px;color:#000;font-weight:400;transform:scaleX(1.0584);transform-origin:0 0;">4641360</div>
<div class="t" style="left:887.83px;top:501.22px;font-size:13.91px;color:#000;font-weight:400;transform:scaleX(1.0584);transform-origin:0 0;">4641360</div>
<div class="t" style="left:725.23px;top:522.22px;font-size:13.91px;color:#000;font-weight:400;transform:scaleX(1.0584);transform-origin:0 0;">2334660</div>
<div class="t" style="left:887.83px;top:522.22px;font-size:13.91px;color:#000;font-weight:400;transform:scaleX(1.0584);transform-origin:0 0;">2334660</div>
<div class="t" style="left:725.23px;top:543.22px;font-size:13.91px;color:#000;font-weight:400;transform:scaleX(1.0584);transform-origin:0 0;">1481880</div>
<div class="t" style="left:887.83px;top:543.22px;font-size:13.91px;color:#000;font-weight:400;transform:scaleX(1.0584);transform-origin:0 0;">1481880</div>
<div class="t" style="left:725.23px;top:564.22px;font-size:13.91px;color:#000;font-weight:400;transform:scaleX(1.0584);transform-origin:0 0;">1551780</div>
<div class="t" style="left:887.83px;top:564.22px;font-size:13.91px;color:#000;font-weight:400;transform:scaleX(1.0584);transform-origin:0 0;">1551780</div>
<div class="t" style="left:725.23px;top:585.22px;font-size:13.91px;color:#000;font-weight:400;transform:scaleX(1.0584);transform-origin:0 0;">1544790</div>
<div class="t" style="left:887.83px;top:585.22px;font-size:13.91px;color:#000;font-weight:400;transform:scaleX(1.0584);transform-origin:0 0;">1544790</div>
<div class="t" style="left:584.06px;top:606.22px;font-size:13.91px;color:#000;font-weight:400;transform:scaleX(1.0584);transform-origin:0 0;">1120130</div>
<div class="t" style="left:888.86px;top:606.22px;font-size:13.91px;color:#000;font-weight:400;transform:scaleX(1.0584);transform-origin:0 0;">1120130</div>
<div class="t" style="left:583.03px;top:627.22px;font-size:13.91px;color:#000;font-weight:400;transform:scaleX(1.0584);transform-origin:0 0;">1647250</div>
<div class="t" style="left:887.83px;top:627.22px;font-size:13.91px;color:#000;font-weight:400;transform:scaleX(1.0584);transform-origin:0 0;">1647250</div>
<div class="t" style="left:583.03px;top:648.22px;font-size:13.91px;color:#000;font-weight:400;transform:scaleX(1.0584);transform-origin:0 0;">1467550</div>
<div class="t" style="left:887.83px;top:648.22px;font-size:13.91px;color:#000;font-weight:400;transform:scaleX(1.0584);transform-origin:0 0;">1467550</div>
<div class="t" style="left:591.21px;top:669.22px;font-size:13.91px;color:#000;font-weight:400;transform:scaleX(1.0584);transform-origin:0 0;">587020</div>
<div class="t" style="left:896.01px;top:669.22px;font-size:13.91px;color:#000;font-weight:400;transform:scaleX(1.0584);transform-origin:0 0;">587020</div>
<div style="position:absolute;left:460px;top:347px;width:58px;height:23px;border:2px solid #02733f;box-sizing:border-box"></div>
<div style="position:absolute;left:514px;top:367px;width:5px;height:5px;background:#02733f;border:1px solid #fff;box-sizing:content-box;margin:-1px"></div>
<div style="position:absolute;left:1095px;top:202px;width:22px;height:473px;background:#e8e8e8;"></div>
<div style="position:absolute;left:1099px;top:204px;width:15px;height:15px;background:#fff;border:1px solid #c6c6c6;box-sizing:border-box;"></div>
<svg style="position:absolute;left:1102px;top:209px;" width="9" height="5" viewBox="0 0 9 5"><path d="M0 5h9L4.5 0z" fill="#777"/></svg>
<div style="position:absolute;left:1099px;top:218px;width:15px;height:139px;background:#fff;border:1px solid #c6c6c6;box-sizing:border-box;"></div>
<div style="position:absolute;left:1099px;top:661px;width:15px;height:14px;background:#fff;border:1px solid #c6c6c6;box-sizing:border-box;"></div>
<svg style="position:absolute;left:1102px;top:666px;" width="9" height="5" viewBox="0 0 9 5"><path d="M0 0h9L4.5 5z" fill="#777"/></svg>
<div style="position:absolute;left:0px;top:675px;width:1117px;height:28px;background:#e8e8e8;"></div>
<div style="position:absolute;left:0px;top:675px;width:1117px;height:1px;background:#a8a8a8;"></div>
<div style="position:absolute;left:0px;top:676px;width:1117px;height:1px;background:#f2f2f2;"></div>
<svg style="position:absolute;left:25px;top:685px;" width="5" height="7" viewBox="0 0 5 7"><path d="M5 0v7L0 3.5z" fill="#c0c0c0"/></svg>
<svg style="position:absolute;left:54px;top:685px;" width="5" height="7" viewBox="0 0 5 7"><path d="M0 0v7l5-3.5z" fill="#c0c0c0"/></svg>
<div style="position:absolute;left:99px;top:675px;width:61px;height:25px;background:#fff;border-left:1px solid #c6c6c6;border-right:1px solid #c6c6c6;box-sizing:border-box"></div>
<div style="position:absolute;left:99px;top:697px;width:61px;height:3px;background:#02733f;"></div>
<div class="t" style="left:110.94px;top:683.93px;font-size:11.30px;color:#02733f;font-weight:700;transform:scaleX(1.0732);transform-origin:0 0;">Лист1</div>
<div class="t" style="left:173.75px;top:683.93px;font-size:11.30px;color:#444;font-weight:400;transform:scaleX(1.1622);transform-origin:0 0;">microexcel.ru</div>
<div style="position:absolute;left:265px;top:679px;width:1px;height:20px;background:#b0b0b0;"></div>
<svg style="position:absolute;left:298px;top:680px;" width="18" height="18" viewBox="0 0 18 18"><circle cx="9" cy="9" r="7.8" fill="none" stroke="#777" stroke-width="1.3"/><path d="M9 4.5v9M4.5 9h9" stroke="#555" stroke-width="1.7"/></svg>
<div style="position:absolute;left:670px;top:684px;width:2px;height:2px;background:#aaa;"></div>
<div style="position:absolute;left:670px;top:688px;width:2px;height:2px;background:#aaa;"></div>
<div style="position:absolute;left:670px;top:692px;width:2px;height:2px;background:#aaa;"></div>
<div style="position:absolute;left:688px;top:682px;width:14px;height:15px;background:#fff;border:1px solid #c6c6c6;box-sizing:border-box;"></div>
<svg style="position:absolute;left:692px;top:686px;" width="5" height="7" viewBox="0 0 5 7"><path d="M5 0v7L0 3.5z" fill="#555"/></svg>
<div style="position:absolute;left:701px;top:682px;width:203px;height:15px;background:#fff;border:1px solid #c6c6c6;box-sizing:border-box;"></div>
<div style="position:absolute;left:904px;top:682px;width:179px;height:15px;background:#e2e2e2;"></div>
<div style="position:absolute;left:1083px;top:682px;width:15px;height:15px;background:#fff;border:1px solid #c6c6c6;box-sizing:border-box;"></div>
<svg style="position:absolute;left:1088px;top:686px;" width="5" height="7" viewBox="0 0 5 7"><path d="M0 0v7l5-3.5z" fill="#555"/></svg>
<div style="position:absolute;left:0px;top:703px;width:1117px;height:20px;background:#f3f3f3;"></div>
<div style="position:absolute;left:0px;top:703px;width:1117px;height:1px;background:#d6d6d6;"></div>
<svg style="position:absolute;left:7px;top:707px;" width="13" height="13" viewBox="0 0 13 13"><circle cx="3" cy="3" r="2.8" fill="#555"/><path d="M6 1.5h6.5v11H1V6.5" fill="none" stroke="#555" stroke-width="1"/><path d="M6 1.5h6.5v2H6z" fill="#555"/><path d="M3 8h2M6.5 8h2M10 8h2M3 10.5h2M6.5 10.5h2M10 10.5h2" stroke="#555" stroke-width="1"/></svg>
<div style="position:absolute;left:817px;top:704px;width:38px;height:19px;background:#c5c5c5;"></div>
<svg style="position:absolute;left:829px;top:707px;" width="13" height="13" viewBox="0 0 13 13"><path d="M0.5 0.5h12v12H0.5zM4.5 0.5v12M8.5 0.5v12M0.5 4.5h12M0.5 8.5h12" fill="none" stroke="#555" stroke-width="1"/></svg>
<svg style="position:absolute;left:868px;top:707px;" width="13" height="13" viewBox="0 0 13 13"><rect x="0.5" y="0.5" width="12" height="12" fill="none" stroke="#555"/><rect x="3" y="3" width="7" height="7" fill="none" stroke="#555"/><path d="M4.5 5h4M4.5 6.5h4M4.5 8h4" stroke="#555" stroke-width="0.8"/></svg>
<svg style="position:absolute;left:905px;top:707px;" width="13" height="13" viewBox="0 0 13 13"><path d="M0.5 0.5h12v12H0.5z" fill="none" stroke="#555"/><path d="M4.5 0.5v5h4v-5" fill="none" stroke="#555"/></svg>
<div style="position:absolute;left:936px;top:712px;width:7px;height:2px;background:#444;"></div>
<div style="position:absolute;left:946px;top:712px;width:100px;height:1px;background:#9a9a9a;"></div>
<div style="position:absolute;left:994px;top:707px;width:5px;height:12px;background:#6d6d6d;"></div>
<div style="position:absolute;left:1049px;top:712.25px;width:9px;height:1.5px;background:#444;"></div>
<div style="position:absolute;left:1052.75px;top:708.5px;width:1.5px;height:9px;background:#444;"></div>
<div class="t" style="left:1067.17px;top:708.09px;font-size:12.17px;color:#444;font-weight:400;transform:scaleX(0.9043);transform-origin:0 0;">100 %</div>
<div style="position:absolute;left:592px;top:89px;width:348px;height:300px;background:#fff;border:1px solid #c6c6c6;box-sizing:border-box;box-shadow:2px 2px 3px rgba(0,0,0,0.12)"></div>
<svg style="position:absolute;left:602px;top:99px;" width="33" height="31" viewBox="0 0 33 31"><rect x="0.5" y="0.5" width="28" height="24" fill="#fff" stroke="#777"/><path d="M0.5 6.5h28" stroke="#777"/><path d="M0.5 12.5h28" stroke="#777"/><path d="M0.5 18.5h28" stroke="#777"/><path d="M7.5 0.5v24" stroke="#777"/><path d="M20.5 0.5v24" stroke="#777"/><rect x="8" y="7" width="12" height="5" fill="#f9c48c"/><rect x="14.5" y="17.5" width="15" height="12" fill="#fff" stroke="#666"/><path d="M20 19.5l-3.5 2 3.5 2M16.5 25.5h3.5M16.5 27.5h3.5M22.5 22.5l4 2.5-4 2.5" fill="none" stroke="#333" stroke-width="1"/></svg>
<div class="t" style="left:639.23px;top:110.62px;font-size:12.03px;color:#444;font-weight:700;transform:scaleX(0.9858);transform-origin:0 0;">Правила выделения ячеек</div>
<svg style="position:absolute;left:602px;top:143px;" width="33" height="31" viewBox="0 0 33 31"><rect x="0.5" y="0.5" width="28" height="24" fill="#fff" stroke="#777"/><path d="M0.5 6.5h28" stroke="#777"/><path d="M0.5 12.5h28" stroke="#777"/><path d="M0.5 18.5h28" stroke="#777"/><path d="M7.5 0.5v24" stroke="#777"/><path d="M20.5 0.5v24" stroke="#777"/><rect x="8" y="1" width="12" height="18" fill="#f9c48c"/><path d="M14 17V4M10.5 7.5L14 4l3.5 3.5" fill="none" stroke="#444" stroke-width="1.3"/><rect x="14.5" y="17.5" width="15" height="12" fill="#fff" stroke="#666"/><text x="16" y="28" font-family="Liberation Sans" font-size="9.5" fill="#444">10</text></svg>
<div class="t" style="left:639.24px;top:154.42px;font-size:12.03px;color:#444;font-weight:700;transform:scaleX(0.9749);transform-origin:0 0;">Правила отбора первых и последних значений</div>
<div style="position:absolute;left:593px;top:180px;width:346px;height:44px;background:#c6c6c6;"></div>
<svg style="position:absolute;left:602px;top:190px;" width="28" height="26" viewBox="0 0 28 26"><rect x="0.75" y="0.75" width="26.5" height="24.5" fill="#fff" stroke="#7a7a7a" stroke-width="1.5"/><rect x="7.5" y="1.00" width="9" height="4.00" fill="#1e88d8"/><rect x="16.5" y="2.20" width="3" height="1.5" fill="#555"/><rect x="7.5" y="6.00" width="2" height="4.00" fill="#1e88d8"/><rect x="16.5" y="7.20" width="3" height="1.5" fill="#555"/><rect x="7.5" y="11.00" width="5" height="4.00" fill="#1e88d8"/><rect x="16.5" y="12.20" width="3" height="1.5" fill="#555"/><rect x="7.5" y="16.00" width="7" height="4.00" fill="#1e88d8"/><rect x="16.5" y="17.20" width="3" height="1.5" fill="#555"/><rect x="7.5" y="21.00" width="5" height="4.00" fill="#1e88d8"/><rect x="16.5" y="22.20" width="3" height="1.5" fill="#555"/><path d="M1 5.50h26" stroke="#a6a6a6" stroke-width="1"/><path d="M1 10.50h26" stroke="#a6a6a6" stroke-width="1"/><path d="M1 15.50h26" stroke="#a6a6a6" stroke-width="1"/><path d="M1 20.50h26" stroke="#a6a6a6" stroke-width="1"/><path d="M7.0 1v24M21.5 1v24" stroke="#a6a6a6" stroke-width="1"/></svg>
<div class="t" style="left:638.34px;top:200.32px;font-size:12.03px;color:#000;font-weight:700;transform:scaleX(0.9759);transform-origin:0 0;">Гистограммы</div>
<svg style="position:absolute;left:602px;top:234px;" width="28" height="26" viewBox="0 0 28 26"><rect x="0.5" y="0.5" width="27" height="25" fill="#fff" stroke="#777"/><rect x="8" y="1" width="13" height="4" fill="#1e88d8"/><rect x="8" y="6" width="13" height="4" fill="#3cae84"/><rect x="8" y="11" width="13" height="4" fill="#fcd29c"/><rect x="8" y="16" width="13" height="4" fill="#f8a33a"/><rect x="8" y="21" width="13" height="4" fill="#ef4a64"/><path d="M0.5 5.5h27M0.5 10.5h27M0.5 15.5h27M0.5 20.5h27M7.5 0.5v25M21.5 0.5v25" stroke="#777"/><path d="M14 3h5M14 8h5M14 13h5M14 18h5M14 23h5" stroke="#444" stroke-width="1"/></svg>
<div class="t" style="left:638.82px;top:244.12px;font-size:12.03px;color:#444;font-weight:700;">Цветовые шкалы</div>
<svg style="position:absolute;left:602px;top:278px;" width="28" height="26" viewBox="0 0 28 26"><rect x="0.5" y="0.5" width="27" height="25" fill="#fff" stroke="#777"/><path d="M0.5 5.5h27M0.5 10.5h27M0.5 15.5h27M0.5 20.5h27M7.5 0.5v25M21.5 0.5v25" stroke="#777"/><circle cx="10.5" cy="3" r="1.4" fill="#1f9e6e"/><circle cx="10.5" cy="8" r="1.4" fill="#f39c1e"/><circle cx="10.5" cy="13" r="1.4" fill="#1f9e6e"/><circle cx="10.5" cy="18" r="1.4" fill="#f39c1e"/><circle cx="10.5" cy="23" r="1.4" fill="#1f9e6e"/><path d="M13.5 3h6M13.5 8h6M13.5 13h6M13.5 18h6M13.5 23h6" stroke="#555" stroke-width="1"/></svg>
<div class="t" style="left:638.84px;top:288.12px;font-size:12.03px;color:#444;font-weight:700;transform:scaleX(0.9776);transform-origin:0 0;">Наборы значков</div>
<svg style="position:absolute;left:925px;top:108.3px;" width="5" height="8" viewBox="0 0 5 8"><path d="M0 0v8l4.5-4z" fill="#777"/></svg>
<svg style="position:absolute;left:925px;top:152.7px;" width="5" height="8" viewBox="0 0 5 8"><path d="M0 0v8l4.5-4z" fill="#777"/></svg>
<svg style="position:absolute;left:925px;top:198.3px;" width="5" height="8" viewBox="0 0 5 8"><path d="M0 0v8l4.5-4z" fill="#777"/></svg>
<svg style="position:absolute;left:925px;top:242px;" width="5" height="8" viewBox="0 0 5 8"><path d="M0 0v8l4.5-4z" fill="#777"/></svg>
<svg style="position:absolute;left:925px;top:286px;" width="5" height="8" viewBox="0 0 5 8"><path d="M0 0v8l4.5-4z" fill="#777"/></svg>
<div style="position:absolute;left:594px;top:313px;width:344px;height:1px;background:#e1e1e1;"></div>
<svg style="position:absolute;left:599px;top:320px;" width="13" height="13" viewBox="0 0 13 13"><rect x="0.5" y="0.5" width="12" height="12" fill="#fff" stroke="#888"/><path d="M0.5 3.5h12M0.5 9.5h12M3.5 0.5v12M9.5 0.5v12" stroke="#888" stroke-width="0.8"/><rect x="4.5" y="4" width="4" height="4" fill="#f7a94a"/></svg>
<div class="t" style="left:625.61px;top:321.59px;font-size:11.59px;color:#444;font-weight:400;transform:scaleX(1.0153);transform-origin:0 0;">Создать правило...</div>
<svg style="position:absolute;left:599px;top:344px;" width="16" height="15" viewBox="0 0 16 15"><rect x="0.5" y="0.5" width="12" height="12" fill="#fff" stroke="#888"/><path d="M0.5 3.5h12M0.5 9.5h12M3.5 0.5v12M9.5 0.5v12" stroke="#888" stroke-width="0.8"/><rect x="4.5" y="4" width="4" height="4" fill="#f7a94a"/><path d="M9 14l5-5 2 2-5 5z" fill="#f9b58c"/><path d="M8.5 12l3-3" stroke="#f39c1e" stroke-width="1.4"/></svg>
<div class="t" style="left:625.85px;top:345.69px;font-size:11.59px;color:#444;font-weight:400;">Удалить правила</div>
<svg style="position:absolute;left:922px;top:347px;" width="5" height="8" viewBox="0 0 5 8"><path d="M0 0v8l4.5-4z" fill="#777"/></svg>
<svg style="position:absolute;left:597px;top:366px;" width="15" height="15" viewBox="0 0 15 15"><path d="M0.5 14V0.5H14" fill="none" stroke="#888"/><rect x="2.5" y="2.5" width="12" height="12" fill="#fff" stroke="#888"/><path d="M2.5 5.5h12M2.5 11.5h12M5.5 2.5v12M11.5 2.5v12" stroke="#888" stroke-width="0.8"/><rect x="6.5" y="6" width="4" height="4" fill="#f7a94a"/></svg>
<div class="t" style="left:625.84px;top:368.99px;font-size:11.59px;color:#444;font-weight:400;transform:scaleX(1.0313);transform-origin:0 0;">Управление правилами...</div>
<div style="position:absolute;left:647.3px;top:122px;width:7.2px;height:1px;background:#444;"></div>
<div style="position:absolute;left:639.2px;top:165px;width:8.5px;height:1px;background:#444;"></div>
<div style="position:absolute;left:639.1px;top:211px;width:5.5px;height:1px;background:#000;"></div>
<div style="position:absolute;left:702.3px;top:254px;width:9.7px;height:1px;background:#444;"></div>
<div style="position:absolute;left:639.6px;top:299px;width:8.1px;height:1px;background:#444;"></div>
<div style="position:absolute;left:626.2px;top:332px;width:7.5px;height:1px;background:#444;"></div>
<div style="position:absolute;left:626.2px;top:356px;width:7.1px;height:1px;background:#444;"></div>
<div style="position:absolute;left:678.1px;top:379px;width:7.2px;height:1px;background:#444;"></div>
<div style="position:absolute;left:939px;top:178px;width:155px;height:236px;background:#fff;border:1px solid #c6c6c6;box-sizing:border-box;box-shadow:2px 2px 3px rgba(0,0,0,0.12)"></div>
<div style="position:absolute;left:944px;top:182px;width:149px;height:23px;background:#ececec;"></div>
<div class="t" style="left:948.84px;top:188.79px;font-size:11.59px;color:#444;font-weight:700;">Градиентная заливка</div>
<svg style="position:absolute;left:946px;top:212px;" width="28" height="26" viewBox="0 0 28 26"><defs><linearGradient id="gb1" x1="0" x2="1"><stop offset="0" stop-color="#1e88d8"/><stop offset="0.38" stop-color="#1e88d8"/><stop offset="0.7" stop-color="#1e88d8" stop-opacity="0.45"/><stop offset="1" stop-color="#1e88d8" stop-opacity="0.05"/></linearGradient></defs><rect x="0.75" y="0.75" width="26.5" height="24.5" fill="#fff" stroke="#7a7a7a" stroke-width="1.5"/><rect x="7" y="1.00" width="3.6" height="4.00" fill="url(#gb1)"/><rect x="16.5" y="2.20" width="3" height="1.5" fill="#555"/><rect x="7" y="6.00" width="11" height="4.00" fill="url(#gb1)"/><rect x="16.5" y="7.20" width="3" height="1.5" fill="#555"/><rect x="7" y="11.00" width="2.6" height="4.00" fill="url(#gb1)"/><rect x="16.5" y="12.20" width="3" height="1.5" fill="#555"/><rect x="7" y="16.00" width="7" height="4.00" fill="url(#gb1)"/><rect x="16.5" y="17.20" width="3" height="1.5" fill="#555"/><rect x="7" y="21.00" width="10" height="4.00" fill="url(#gb1)"/><rect x="16.5" y="22.20" width="3" height="1.5" fill="#555"/><path d="M1 5.50h26" stroke="#a6a6a6" stroke-width="1"/><path d="M1 10.50h26" stroke="#a6a6a6" stroke-width="1"/><path d="M1 15.50h26" stroke="#a6a6a6" stroke-width="1"/><path d="M1 20.50h26" stroke="#a6a6a6" stroke-width="1"/><path d="M6.5 1v24M21.5 1v24" stroke="#a6a6a6" stroke-width="1"/></svg>
<svg style="position:absolute;left:986px;top:212px;" width="28" height="26" viewBox="0 0 28 26"><defs><linearGradient id="gg1" x1="0" x2="1"><stop offset="0" stop-color="#1f9e6e"/><stop offset="0.38" stop-color="#1f9e6e"/><stop offset="0.7" stop-color="#1f9e6e" stop-opacity="0.45"/><stop offset="1" stop-color="#1f9e6e" stop-opacity="0.05"/></linearGradient></defs><rect x="0.75" y="0.75" width="26.5" height="24.5" fill="#fff" stroke="#7a7a7a" stroke-width="1.5"/><rect x="7" y="1.00" width="3.6" height="4.00" fill="url(#gg1)"/><rect x="16.5" y="2.20" width="3" height="1.5" fill="#555"/><rect x="7" y="6.00" width="11" height="4.00" fill="url(#gg1)"/><rect x="16.5" y="7.20" width="3" height="1.5" fill="#555"/><rect x="7" y="11.00" width="2.6" height="4.00" fill="url(#gg1)"/><rect x="16.5" y="12.20" width="3" height="1.5" fill="#555"/><rect x="7" y="16.00" width="7" height="4.00" fill="url(#gg1)"/><rect x="16.5" y="17.20" width="3" height="1.5" fill="#555"/><rect x="7" y="21.00" width="10" height="4.00" fill="url(#gg1)"/><rect x="16.5" y="22.20" width="3" height="1.5" fill="#555"/><path d="M1 5.50h26" stroke="#a6a6a6" stroke-width="1"/><path d="M1 10.50h26" stroke="#a6a6a6" stroke-width="1"/><path d="M1 15.50h26" stroke="#a6a6a6" stroke-width="1"/><path d="M1 20.50h26" stroke="#a6a6a6" stroke-width="1"/><path d="M6.5 1v24M21.5 1v24" stroke="#a6a6a6" stroke-width="1"/></svg>
<svg style="position:absolute;left:1026px;top:212px;" width="28" height="26" viewBox="0 0 28 26"><defs><linearGradient id="gr1" x1="0" x2="1"><stop offset="0" stop-color="#ef4a64"/><stop offset="0.38" stop-color="#ef4a64"/><stop offset="0.7" stop-color="#ef4a64" stop-opacity="0.45"/><stop offset="1" stop-color="#ef4a64" stop-opacity="0.05"/></linearGradient></defs><rect x="0.75" y="0.75" width="26.5" height="24.5" fill="#fff" stroke="#7a7a7a" stroke-width="1.5"/><rect x="7" y="1.00" width="3.6" height="4.00" fill="url(#gr1)"/><rect x="16.5" y="2.20" width="3" height="1.5" fill="#555"/><rect x="7" y="6.00" width="11" height="4.00" fill="url(#gr1)"/><rect x="16.5" y="7.20" width="3" height="1.5" fill="#555"/><rect x="7" y="11.00" width="2.6" height="4.00" fill="url(#gr1)"/><rect x="16.5" y="12.20" width="3" height="1.5" fill="#555"/><rect x="7" y="16.00" width="7" height="4.00" fill="url(#gr1)"/><rect x="16.5" y="17.20" width="3" height="1.5" fill="#555"/><rect x="7" y="21.00" width="10" height="4.00" fill="url(#gr1)"/><rect x="16.5" y="22.20" width="3" height="1.5" fill="#555"/><path d="M1 5.50h26" stroke="#a6a6a6" stroke-width="1"/><path d="M1 10.50h26" stroke="#a6a6a6" stroke-width="1"/><path d="M1 15.50h26" stroke="#a6a6a6" stroke-width="1"/><path d="M1 20.50h26" stroke="#a6a6a6" stroke-width="1"/><path d="M6.5 1v24M21.5 1v24" stroke="#a6a6a6" stroke-width="1"/></svg>
<svg style="position:absolute;left:946px;top:252px;" width="28" height="26" viewBox="0 0 28 26"><defs><linearGradient id="go2" x1="0" x2="1"><stop offset="0" stop-color="#f39c1e"/><stop offset="0.38" stop-color="#f39c1e"/><stop offset="0.7" stop-color="#f39c1e" stop-opacity="0.45"/><stop offset="1" stop-color="#f39c1e" stop-opacity="0.05"/></linearGradient></defs><rect x="0.75" y="0.75" width="26.5" height="24.5" fill="#fff" stroke="#7a7a7a" stroke-width="1.5"/><rect x="7" y="1.00" width="3.6" height="4.00" fill="url(#go2)"/><rect x="16.5" y="2.20" width="3" height="1.5" fill="#555"/><rect x="7" y="6.00" width="11" height="4.00" fill="url(#go2)"/><rect x="16.5" y="7.20" width="3" height="1.5" fill="#555"/><rect x="7" y="11.00" width="2.6" height="4.00" fill="url(#go2)"/><rect x="16.5" y="12.20" width="3" height="1.5" fill="#555"/><rect x="7" y="16.00" width="7" height="4.00" fill="url(#go2)"/><rect x="16.5" y="17.20" width="3" height="1.5" fill="#555"/><rect x="7" y="21.00" width="10" height="4.00" fill="url(#go2)"/><rect x="16.5" y="22.20" width="3" height="1.5" fill="#555"/><path d="M1 5.50h26" stroke="#a6a6a6" stroke-width="1"/><path d="M1 10.50h26" stroke="#a6a6a6" stroke-width="1"/><path d="M1 15.50h26" stroke="#a6a6a6" stroke-width="1"/><path d="M1 20.50h26" stroke="#a6a6a6" stroke-width="1"/><path d="M6.5 1v24M21.5 1v24" stroke="#a6a6a6" stroke-width="1"/></svg>
<svg style="position:absolute;left:986px;top:252px;" width="28" height="26" viewBox="0 0 28 26"><defs><linearGradient id="gc2" x1="0" x2="1"><stop offset="0" stop-color="#1ba1e2"/><stop offset="0.38" stop-color="#1ba1e2"/><stop offset="0.7" stop-color="#1ba1e2" stop-opacity="0.45"/><stop offset="1" stop-color="#1ba1e2" stop-opacity="0.05"/></linearGradient></defs><rect x="0.75" y="0.75" width="26.5" height="24.5" fill="#fff" stroke="#7a7a7a" stroke-width="1.5"/><rect x="7" y="1.00" width="3.6" height="4.00" fill="url(#gc2)"/><rect x="16.5" y="2.20" width="3" height="1.5" fill="#555"/><rect x="7" y="6.00" width="11" height="4.00" fill="url(#gc2)"/><rect x="16.5" y="7.20" width="3" height="1.5" fill="#555"/><rect x="7" y="11.00" width="2.6" height="4.00" fill="url(#gc2)"/><rect x="16.5" y="12.20" width="3" height="1.5" fill="#555"/><rect x="7" y="16.00" width="7" height="4.00" fill="url(#gc2)"/><rect x="16.5" y="17.20" width="3" height="1.5" fill="#555"/><rect x="7" y="21.00" width="10" height="4.00" fill="url(#gc2)"/><rect x="16.5" y="22.20" width="3" height="1.5" fill="#555"/><path d="M1 5.50h26" stroke="#a6a6a6" stroke-width="1"/><path d="M1 10.50h26" stroke="#a6a6a6" stroke-width="1"/><path d="M1 15.50h26" stroke="#a6a6a6" stroke-width="1"/><path d="M1 20.50h26" stroke="#a6a6a6" stroke-width="1"/><path d="M6.5 1v24M21.5 1v24" stroke="#a6a6a6" stroke-width="1"/></svg>
<svg style="position:absolute;left:1026px;top:252px;" width="28" height="26" viewBox="0 0 28 26"><defs><linearGradient id="gp2" x1="0" x2="1"><stop offset="0" stop-color="#e84c8a"/><stop offset="0.38" stop-color="#e84c8a"/><stop offset="0.7" stop-color="#e84c8a" stop-opacity="0.45"/><stop offset="1" stop-color="#e84c8a" stop-opacity="0.05"/></linearGradient></defs><rect x="0.75" y="0.75" width="26.5" height="24.5" fill="#fff" stroke="#7a7a7a" stroke-width="1.5"/><rect x="7" y="1.00" width="3.6" height="4.00" fill="url(#gp2)"/><rect x="16.5" y="2.20" width="3" height="1.5" fill="#555"/><rect x="7" y="6.00" width="11" height="4.00" fill="url(#gp2)"/><rect x="16.5" y="7.20" width="3" height="1.5" fill="#555"/><rect x="7" y="11.00" width="2.6" height="4.00" fill="url(#gp2)"/><rect x="16.5" y="12.20" width="3" height="1.5" fill="#555"/><rect x="7" y="16.00" width="7" height="4.00" fill="url(#gp2)"/><rect x="16.5" y="17.20" width="3" height="1.5" fill="#555"/><rect x="7" y="21.00" width="10" height="4.00" fill="url(#gp2)"/><rect x="16.5" y="22.20" width="3" height="1.5" fill="#555"/><path d="M1 5.50h26" stroke="#a6a6a6" stroke-width="1"/><path d="M1 10.50h26" stroke="#a6a6a6" stroke-width="1"/><path d="M1 15.50h26" stroke="#a6a6a6" stroke-width="1"/><path d="M1 20.50h26" stroke="#a6a6a6" stroke-width="1"/><path d="M6.5 1v24M21.5 1v24" stroke="#a6a6a6" stroke-width="1"/></svg>
<div style="position:absolute;left:944px;top:285px;width:149px;height:22px;background:#ececec;"></div>
<div class="t" style="left:949.04px;top:291.09px;font-size:11.59px;color:#444;font-weight:700;transform:scaleX(0.9885);transform-origin:0 0;">Сплошная заливка</div>
<svg style="position:absolute;left:946px;top:314px;" width="28" height="26" viewBox="0 0 28 26"><rect x="0.75" y="0.75" width="26.5" height="24.5" fill="#fff" stroke="#7a7a7a" stroke-width="1.5"/><rect x="7" y="1.00" width="5.4" height="4.00" fill="#1e88d8"/><rect x="16.5" y="2.20" width="3" height="1.5" fill="#555"/><rect x="7" y="6.00" width="14" height="4.00" fill="#1e88d8"/><rect x="16.5" y="7.20" width="3" height="1.5" fill="#555"/><rect x="7" y="11.00" width="3.4" height="4.00" fill="#1e88d8"/><rect x="16.5" y="12.20" width="3" height="1.5" fill="#555"/><rect x="7" y="16.00" width="8.4" height="4.00" fill="#1e88d8"/><rect x="16.5" y="17.20" width="3" height="1.5" fill="#555"/><rect x="7" y="21.00" width="12.4" height="4.00" fill="#1e88d8"/><rect x="16.5" y="22.20" width="3" height="1.5" fill="#555"/><path d="M1 5.50h26" stroke="#a6a6a6" stroke-width="1"/><path d="M1 10.50h26" stroke="#a6a6a6" stroke-width="1"/><path d="M1 15.50h26" stroke="#a6a6a6" stroke-width="1"/><path d="M1 20.50h26" stroke="#a6a6a6" stroke-width="1"/><path d="M6.5 1v24M21.5 1v24" stroke="#a6a6a6" stroke-width="1"/></svg>
<svg style="position:absolute;left:986px;top:314px;" width="28" height="26" viewBox="0 0 28 26"><rect x="0.75" y="0.75" width="26.5" height="24.5" fill="#fff" stroke="#7a7a7a" stroke-width="1.5"/><rect x="7" y="1.00" width="5.4" height="4.00" fill="#1f9e6e"/><rect x="16.5" y="2.20" width="3" height="1.5" fill="#555"/><rect x="7" y="6.00" width="14" height="4.00" fill="#1f9e6e"/><rect x="16.5" y="7.20" width="3" height="1.5" fill="#555"/><rect x="7" y="11.00" width="3.4" height="4.00" fill="#1f9e6e"/><rect x="16.5" y="12.20" width="3" height="1.5" fill="#555"/><rect x="7" y="16.00" width="8.4" height="4.00" fill="#1f9e6e"/><rect x="16.5" y="17.20" width="3" height="1.5" fill="#555"/><rect x="7" y="21.00" width="12.4" height="4.00" fill="#1f9e6e"/><rect x="16.5" y="22.20" width="3" height="1.5" fill="#555"/><path d="M1 5.50h26" stroke="#a6a6a6" stroke-width="1"/><path d="M1 10.50h26" stroke="#a6a6a6" stroke-width="1"/><path d="M1 15.50h26" stroke="#a6a6a6" stroke-width="1"/><path d="M1 20.50h26" stroke="#a6a6a6" stroke-width="1"/><path d="M6.5 1v24M21.5 1v24" stroke="#a6a6a6" stroke-width="1"/></svg>
<svg style="position:absolute;left:1026px;top:314px;" width="28" height="26" viewBox="0 0 28 26"><rect x="0.75" y="0.75" width="26.5" height="24.5" fill="#fff" stroke="#7a7a7a" stroke-width="1.5"/><rect x="7" y="1.00" width="5.4" height="4.00" fill="#ef4a64"/><rect x="16.5" y="2.20" width="3" height="1.5" fill="#555"/><rect x="7" y="6.00" width="14" height="4.00" fill="#ef4a64"/><rect x="16.5" y="7.20" width="3" height="1.5" fill="#555"/><rect x="7" y="11.00" width="3.4" height="4.00" fill="#ef4a64"/><rect x="16.5" y="12.20" width="3" height="1.5" fill="#555"/><rect x="7" y="16.00" width="8.4" height="4.00" fill="#ef4a64"/><rect x="16.5" y="17.20" width="3" height="1.5" fill="#555"/><rect x="7" y="21.00" width="12.4" height="4.00" fill="#ef4a64"/><rect x="16.5" y="22.20" width="3" height="1.5" fill="#555"/><path d="M1 5.50h26" stroke="#a6a6a6" stroke-width="1"/><path d="M1 10.50h26" stroke="#a6a6a6" stroke-width="1"/><path d="M1 15.50h26" stroke="#a6a6a6" stroke-width="1"/><path d="M1 20.50h26" stroke="#a6a6a6" stroke-width="1"/><path d="M6.5 1v24M21.5 1v24" stroke="#a6a6a6" stroke-width="1"/></svg>
<svg style="position:absolute;left:946px;top:354px;" width="28" height="26" viewBox="0 0 28 26"><rect x="0.75" y="0.75" width="26.5" height="24.5" fill="#fff" stroke="#7a7a7a" stroke-width="1.5"/><rect x="7" y="1.00" width="5.4" height="4.00" fill="#f39c1e"/><rect x="16.5" y="2.20" width="3" height="1.5" fill="#555"/><rect x="7" y="6.00" width="14" height="4.00" fill="#f39c1e"/><rect x="16.5" y="7.20" width="3" height="1.5" fill="#555"/><rect x="7" y="11.00" width="3.4" height="4.00" fill="#f39c1e"/><rect x="16.5" y="12.20" width="3" height="1.5" fill="#555"/><rect x="7" y="16.00" width="8.4" height="4.00" fill="#f39c1e"/><rect x="16.5" y="17.20" width="3" height="1.5" fill="#555"/><rect x="7" y="21.00" width="12.4" height="4.00" fill="#f39c1e"/><rect x="16.5" y="22.20" width="3" height="1.5" fill="#555"/><path d="M1 5.50h26" stroke="#a6a6a6" stroke-width="1"/><path d="M1 10.50h26" stroke="#a6a6a6" stroke-width="1"/><path d="M1 15.50h26" stroke="#a6a6a6" stroke-width="1"/><path d="M1 20.50h26" stroke="#a6a6a6" stroke-width="1"/><path d="M6.5 1v24M21.5 1v24" stroke="#a6a6a6" stroke-width="1"/></svg>
<svg style="position:absolute;left:986px;top:354px;" width="28" height="26" viewBox="0 0 28 26"><rect x="0.75" y="0.75" width="26.5" height="24.5" fill="#fff" stroke="#7a7a7a" stroke-width="1.5"/><rect x="7" y="1.00" width="5.4" height="4.00" fill="#1e88d8"/><rect x="16.5" y="2.20" width="3" height="1.5" fill="#555"/><rect x="7" y="6.00" width="14" height="4.00" fill="#1e88d8"/><rect x="16.5" y="7.20" width="3" height="1.5" fill="#555"/><rect x="7" y="11.00" width="3.4" height="4.00" fill="#1e88d8"/><rect x="16.5" y="12.20" width="3" height="1.5" fill="#555"/><rect x="7" y="16.00" width="8.4" height="4.00" fill="#1e88d8"/><rect x="16.5" y="17.20" width="3" height="1.5" fill="#555"/><rect x="7" y="21.00" width="12.4" height="4.00" fill="#1e88d8"/><rect x="16.5" y="22.20" width="3" height="1.5" fill="#555"/><path d="M1 5.50h26" stroke="#a6a6a6" stroke-width="1"/><path d="M1 10.50h26" stroke="#a6a6a6" stroke-width="1"/><path d="M1 15.50h26" stroke="#a6a6a6" stroke-width="1"/><path d="M1 20.50h26" stroke="#a6a6a6" stroke-width="1"/><path d="M6.5 1v24M21.5 1v24" stroke="#a6a6a6" stroke-width="1"/></svg>
<svg style="position:absolute;left:1026px;top:354px;" width="28" height="26" viewBox="0 0 28 26"><rect x="0.75" y="0.75" width="26.5" height="24.5" fill="#fff" stroke="#7a7a7a" stroke-width="1.5"/><rect x="7" y="1.00" width="5.4" height="4.00" fill="#ef4a64"/><rect x="16.5" y="2.20" width="3" height="1.5" fill="#555"/><rect x="7" y="6.00" width="14" height="4.00" fill="#ef4a64"/><rect x="16.5" y="7.20" width="3" height="1.5" fill="#555"/><rect x="7" y="11.00" width="3.4" height="4.00" fill="#ef4a64"/><rect x="16.5" y="12.20" width="3" height="1.5" fill="#555"/><rect x="7" y="16.00" width="8.4" height="4.00" fill="#ef4a64"/><rect x="16.5" y="17.20" width="3" height="1.5" fill="#555"/><rect x="7" y="21.00" width="12.4" height="4.00" fill="#ef4a64"/><rect x="16.5" y="22.20" width="3" height="1.5" fill="#555"/><path d="M1 5.50h26" stroke="#a6a6a6" stroke-width="1"/><path d="M1 10.50h26" stroke="#a6a6a6" stroke-width="1"/><path d="M1 15.50h26" stroke="#a6a6a6" stroke-width="1"/><path d="M1 20.50h26" stroke="#a6a6a6" stroke-width="1"/><path d="M6.5 1v24M21.5 1v24" stroke="#a6a6a6" stroke-width="1"/></svg>
<div style="position:absolute;left:944px;top:388px;width:149px;height:1px;background:#e1e1e1;"></div>
<div class="t" style="left:971.94px;top:396.39px;font-size:11.59px;color:#444;font-weight:400;transform:scaleX(1.0254);transform-origin:0 0;">Другие правила...</div>
<div style="position:absolute;left:996px;top:407px;width:4.5px;height:1px;background:#444;"></div>
<div style="position:absolute;left:52px;top:29px;width:70px;height:37px;border:3px solid #fb0202;border-radius:12px;box-sizing:border-box"></div>
<div style="position:absolute;left:586px;top:59px;width:203px;height:37px;border:3px solid #fb0202;border-radius:12px;box-sizing:border-box"></div>
<div style="position:absolute;left:589px;top:177px;width:349px;height:51px;border:3px solid #fb0202;border-radius:13px;box-sizing:border-box"></div>
<div style="position:absolute;left:940px;top:178px;width:157px;height:215px;border:3px solid #fb0202;border-radius:13px;box-sizing:border-box"></div>
<div style="position:absolute;left:453px;top:340px;width:74px;height:39px;border:3px solid #fb0202;border-radius:11px;box-sizing:border-box"></div>
</body></html>
